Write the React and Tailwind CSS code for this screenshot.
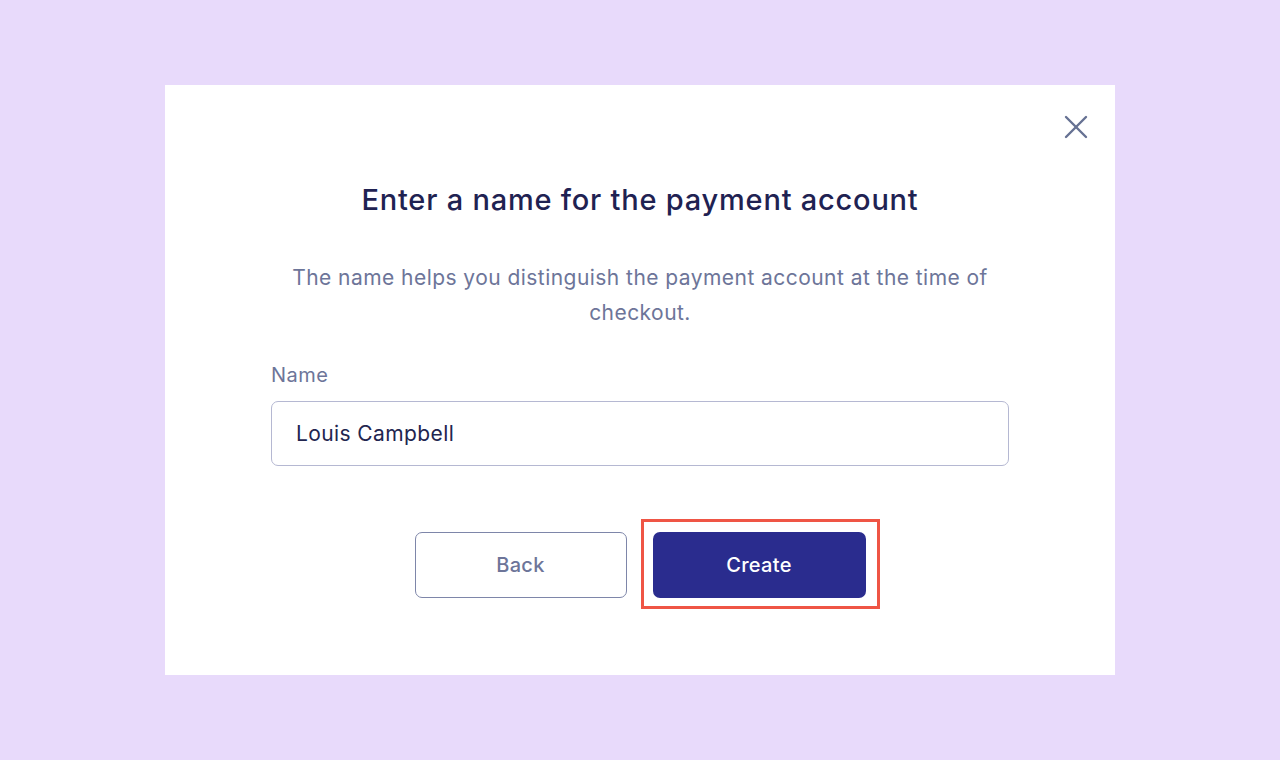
import React, { useState } from "react";

// Payment account naming modal
export default function App() {
  const [name, setName] = useState("Louis Campbell");

  return (
    <div
      className="min-h-[760px] w-full bg-[#e8dafb] flex items-start justify-center pt-[85px]"
      style={{ fontFamily: "Inter, 'Noto Sans', sans-serif" }}
    >
      <div className="relative w-[950px] h-[590px] bg-white flex flex-col items-center">
        {/* close */}
        <button className="absolute right-[27px] top-[30px] w-[24px] h-[24px] flex items-center justify-center text-[#667193]">
          <svg width="24" height="24" viewBox="0 0 24 24" fill="none" stroke="currentColor" strokeWidth="2.4" strokeLinecap="round">
            <path d="M2 2 L22 22" />
            <path d="M22 2 L2 22" />
          </svg>
        </button>

        <h1 className="mt-[97px] text-[29px] leading-[36px] font-medium tracking-[0.78px] text-[#1f2252]">
          Enter a name for the payment account
        </h1>

        <p className="mt-[42px] w-[720px] text-center text-[21px] leading-[35px] tracking-[0.45px] text-[#6d7599]">
          The name helps you distinguish the payment account at the time of checkout.
        </p>

        <div className="mt-[33px] w-[738px]">
          <label className="block text-[20px] leading-[24px] tracking-[0.5px] text-[#6d7599]">Name</label>
          <input
            className="mt-[14px] w-full h-[65px] rounded-[7px] border border-[#b5b8d2] px-[24px] text-[21px] tracking-[0.4px] text-[#22254f] outline-none"
            value={name}
            onChange={e => setName(e.target.value)}
          />
        </div>

        <div className="mt-[66px] flex items-center gap-[26px]">
          <button className="w-[212px] h-[66px] rounded-[7px] border border-[#7e86a9] text-[20px] font-medium tracking-[0.3px] text-[#6d7599] bg-white">
            Back
          </button>
          <div className="relative">
            <button className="w-[213px] h-[66px] rounded-[7px] bg-[#2a2c8e] text-[20px] font-medium tracking-[0.3px] text-white">
              Create
            </button>
            {/* highlight annotation */}
            <span className="pointer-events-none absolute -left-[12px] -top-[13px] -right-[14px] -bottom-[11px] border-[3px] border-[#ef5545]" />
          </div>
        </div>
      </div>
    </div>
  );
}
